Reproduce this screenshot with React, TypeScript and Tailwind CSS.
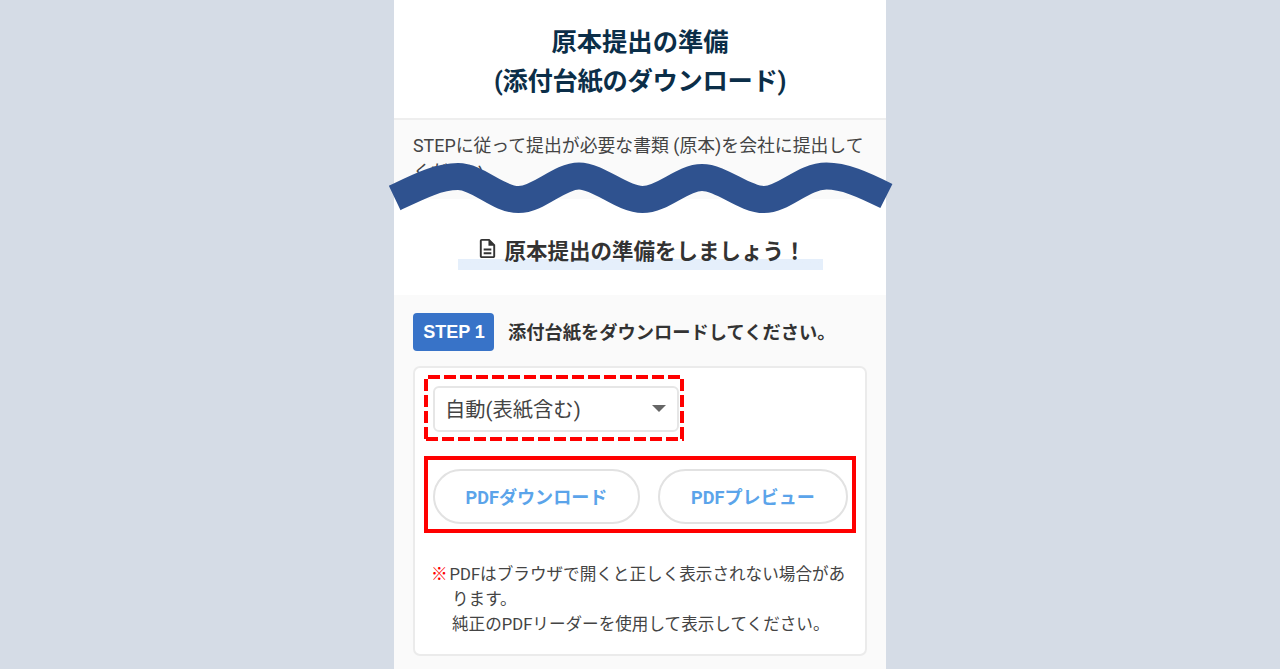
import type { ReactNode } from "react";

// onda que corta a tela
function Wave() {
  return (
    <svg className="absolute left-[-14px] top-[150px] z-10" width="520" height="75" viewBox="380 150 520 75" fill="none">
      <path
        d="M394.7 198 C418 186.8 438 176.6 458 176.6 C478 176.6 498 199.6 518.5 199.6 C539 199.6 559 176 579 176 C599 176 622 199.6 642.5 199.6 C663 199.6 682 177.5 702 177.5 C722 177.5 744 199.6 764 199.6 C784 199.6 803 176 826.5 176 C844 176 862 183.8 886.4 196"
        stroke="#2f528f"
        strokeWidth="27"
      />
    </svg>
  );
}

// moldura tracejada em volta do select
function DashedFrame() {
  return (
    <svg className="absolute left-[-9px] top-[-11px]" width="260" height="66" viewBox="0 0 260 66" stroke="#ff0000" strokeWidth="4" strokeDasharray="12 4">
      <path d="M4 2H260" />
      <path d="M2 4V66" />
      <path d="M258 4V66" />
      <path d="M2 64H260" />
    </svg>
  );
}

function DocIcon() {
  return (
    <svg className="mt-[22px] mr-[6px] shrink-0" width="23" height="23" viewBox="0 0 24 24" fill="#333333">
      <path d="M8 16h8v2H8zm0-4h8v2H8zm6-10H6c-1.100 0-2 .9-2 2v16c0 1.100.890 2 1.990 2H18c1.100 0 2-.9 2-2V8l-6-6zm4 18H6V4h7v5h5v11z" />
    </svg>
  );
}

function PillButton({ className, children }: { className: string; children: ReactNode }) {
  return (
    <button className={`flex h-[55px] items-center justify-center whitespace-nowrap rounded-full border-2 border-[#e2e2e2] bg-white pt-[3px] text-[18.100px] font-bold text-[#5ba4ea] ${className}`}>
      {children}
    </button>
  );
}

export default function App() {
  return (
    <div className="flex h-[669px] justify-center overflow-hidden bg-[#d5dce6] font-[Roboto,'Noto_Sans_CJK_JP',sans-serif]">
      <main className="relative h-full w-[492px] bg-white text-[#444444]">
        {/* cabecalho */}
        <header className="h-[120px] border-b-2 border-[#eeeeee] pt-[23px] text-center text-[25.3px] leading-[39px] font-bold text-[#0b2e48]">
          <h1>
            原本提出の準備
            <br />
            <span className="tracking-[-0.3px]">(添付台紙のダウンロード)</span>
          </h1>
        </header>

        <p className="h-[79px] bg-[#fafafa] pt-[13px] pl-[19px] text-[17.850px] leading-[26px] whitespace-nowrap">
          STEPに従って提出が必要な書類 (原本)を会社に提出して
          <br />
          ください。
        </p>
        <Wave />

        <div className="flex h-24 justify-center pt-[16px]">
          <h2 className="flex h-[55px] w-[365px] bg-linear-to-t from-[#e5effb] from-[11px] to-transparent to-[11px] pl-[18px] text-[21.500px] font-bold whitespace-nowrap text-[#333333]">
            <DocIcon />
            <span className="pt-[21px] leading-[32px]">原本提出の準備をしましょう！</span>
          </h2>
        </div>

        <section className="h-[374px] bg-[#fafafa] px-[19px] pt-[18px]">
          <div className="flex h-[38px] items-center">
            <span className="flex h-[38px] w-[81px] items-center justify-center rounded-[4px] bg-[#3873c8] pt-px pl-px font-['Liberation_Sans',sans-serif] text-[18px] font-bold text-white">
              STEP 1
            </span>
            <h3 className="ml-[14px] pt-[2px] text-[18.250px] font-bold whitespace-nowrap text-[#333333]">添付台紙をダウンロードしてください。</h3>
          </div>

          <div className="mt-[15px] h-[290px] rounded-[7px] border-2 border-[#ebebeb] bg-white pt-[18px] pl-[9px]">
            <div className="relative ml-[9px] flex h-[46px] w-[246px] items-center justify-between rounded-[6px] border-2 border-[#e6e6e6] pr-[11px] pl-[10px] text-[20.300px]">
              <span className="pt-[2px]">自動(表紙含む)</span>
              <svg className="mb-[2px]" width="14" height="7" viewBox="0 0 14 7" fill="#666666">
                <path d="M0 0h14L7 7z" />
              </svg>
              <div className="absolute -top-0.5 -left-0.5">
                <DashedFrame />
              </div>
            </div>

            {/* botoes do PDF */}
            <div className="mt-[24px] flex h-[77px] w-[432px] gap-[18px] border-4 border-[#ff0000] pt-[9px] pl-[5px]">
              <PillButton className="w-[207px]">PDFダウンロード</PillButton>
              <PillButton className="w-[190px]">PDFプレビュー</PillButton>
            </div>

            <p className="mt-[29px] pl-[28px] text-[16.600px] leading-[25px] whitespace-nowrap">
              <span className="-ml-[21px] mr-[2px] font-bold text-[#ff0000]">※</span>
              PDFはブラウザで開くと正しく表示されない場合があ
              <br />
              ります。
              <br />
              純正のPDFリーダーを使用して表示してください。
            </p>
          </div>
        </section>
      </main>
    </div>
  );
}
